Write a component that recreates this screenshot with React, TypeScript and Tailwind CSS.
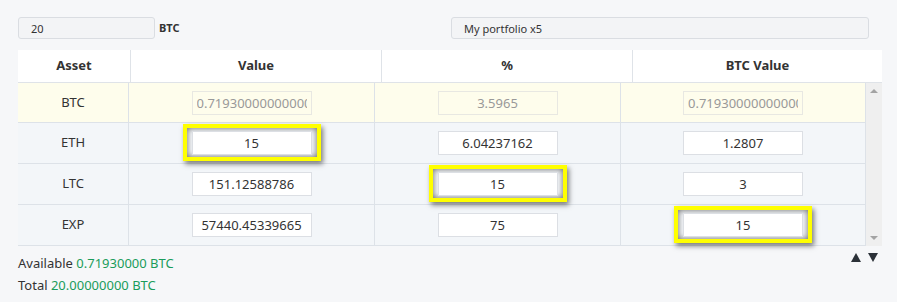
import { useState } from 'react';

type Row = { asset: string; value: string; pct: string; btc: string; locked?: boolean; mark?: 'value' | 'pct' | 'btc' };

const rows: Row[] = [
    { asset: 'BTC', value: '0.71930000000000', pct: '3.5965', btc: '0.71930000000000', locked: true },
    { asset: 'ETH', value: '15', pct: '6.04237162', btc: '1.2807', mark: 'value' },
    { asset: 'LTC', value: '151.12588786', pct: '15', btc: '3', mark: 'pct' },
    { asset: 'EXP', value: '57440.45339665', pct: '75', btc: '15', mark: 'btc' },
];

// cell input, with the yellow annotation frame when marked
const CellInput = ({ value, locked, marked }: { value: string; locked?: boolean; marked?: boolean }) => (
    <div className='relative'>
        {marked && (
            <div className='absolute -inset-x-[9px] -top-[7px] -bottom-[6px] border-[4px] border-[#ffff00] shadow-[2px_3px_5px_rgba(0,0,0,0.5),inset_0_0_6px_rgba(0,0,0,0.6)] pointer-events-none' />
        )}
        <input
            readOnly
            value={value}
            disabled={locked}
            className={`relative w-[120px] h-[24px] border text-center text-[13px] px-1 outline-none ${locked ? 'bg-transparent border-[#e8e8e2] text-[#999]' : 'bg-white border-[#dcdfe4] text-[#333]'}`}
        />
    </div>
);

const App = () => {
    const [amount] = useState('20');

    return (
        <div className="w-[897px] h-[302px] bg-[#f6f7f9] pl-[18px] pt-[17px] text-[#333] font-['Noto_Sans',sans-serif] overflow-hidden">
            <div className='flex items-center h-[22px]'>
                <div className='w-[433px] flex items-center'>
                    <input
                        readOnly
                        value={amount}
                        className='w-[137px] h-[22px] border border-[#dadde2] rounded-[3px] bg-[#f3f4f6] text-[11px] pl-[12px] outline-none'
                    />
                    <span className='ml-[4px] text-[11px] font-bold'>BTC</span>
                </div>
                <input
                    readOnly
                    value='My portfolio x5'
                    className='w-[418px] h-[22px] border border-[#dadde2] rounded-[3px] bg-[#f3f4f6] text-[11px] pl-[12px] outline-none'
                />
            </div>

            <div className='mt-[11px] w-[864px]'>
                <div className='grid grid-cols-[112px_251px_251px_250px] h-[33px] bg-white border-b border-[#dfe3e8] text-[13px] font-bold'>
                    <div className='flex items-center justify-center'>Asset</div>
                    <div className='flex items-center justify-center border-l border-[#dfe3e8]'>Value</div>
                    <div className='flex items-center justify-center border-l border-[#dfe3e8]'>%</div>
                    <div className='flex items-center justify-center border-l border-[#dfe3e8]'>BTC Value</div>
                </div>
                <div className='flex'>
                    <div className='w-[847px]'>
                        {rows.map((r) => (
                            <div
                                key={r.asset}
                                className={`grid grid-cols-[110px_246px_246px_245px] border-b border-[#dde2e8] text-[13px] ${r.locked ? 'bg-[#fefdec] h-[40px]' : 'bg-[#f3f6f9] h-[41px]'}`}
                            >
                                <div className='flex items-center justify-center'>{r.asset}</div>
                                <div className='flex items-center justify-center border-l border-[#dde2e8]'>
                                    <CellInput value={r.value} locked={r.locked} marked={r.mark === 'value'} />
                                </div>
                                <div className='flex items-center justify-center border-l border-[#dde2e8]'>
                                    <CellInput value={r.pct} locked={r.locked} marked={r.mark === 'pct'} />
                                </div>
                                <div className='flex items-center justify-center border-l border-[#dde2e8]'>
                                    <CellInput value={r.btc} locked={r.locked} marked={r.mark === 'btc'} />
                                </div>
                            </div>
                        ))}
                    </div>
                    <div className='w-[17px] bg-[#efefef] border-l border-[#dde2e8] flex flex-col items-center justify-between py-[6px]'>
                        <span className='w-0 h-0 border-x-[4px] border-x-transparent border-b-[4px] border-b-[#a3a3a3]' />
                        <span className='w-0 h-0 border-x-[4px] border-x-transparent border-t-[4px] border-t-[#a3a3a3]' />
                    </div>
                </div>
            </div>

            <div className='relative w-[864px] mt-[7px] text-[13px]'>
                <p className='leading-[20px]'>Available <span className='text-[#1a9c5b]'>0.71930000 BTC</span></p>
                <p className='leading-[20px] mt-[2px]'>Total <span className='text-[#1a9c5b]'>20.00000000 BTC</span></p>
                <div className='absolute right-[4px] top-[0px] flex gap-[7px]'>
                    <span className='w-0 h-0 border-x-[5px] border-x-transparent border-b-[9px] border-b-[#2b3138]' />
                    <span className='w-0 h-0 border-x-[5px] border-x-transparent border-t-[9px] border-t-[#2b3138]' />
                </div>
            </div>
        </div>
    );
};

export default App;
